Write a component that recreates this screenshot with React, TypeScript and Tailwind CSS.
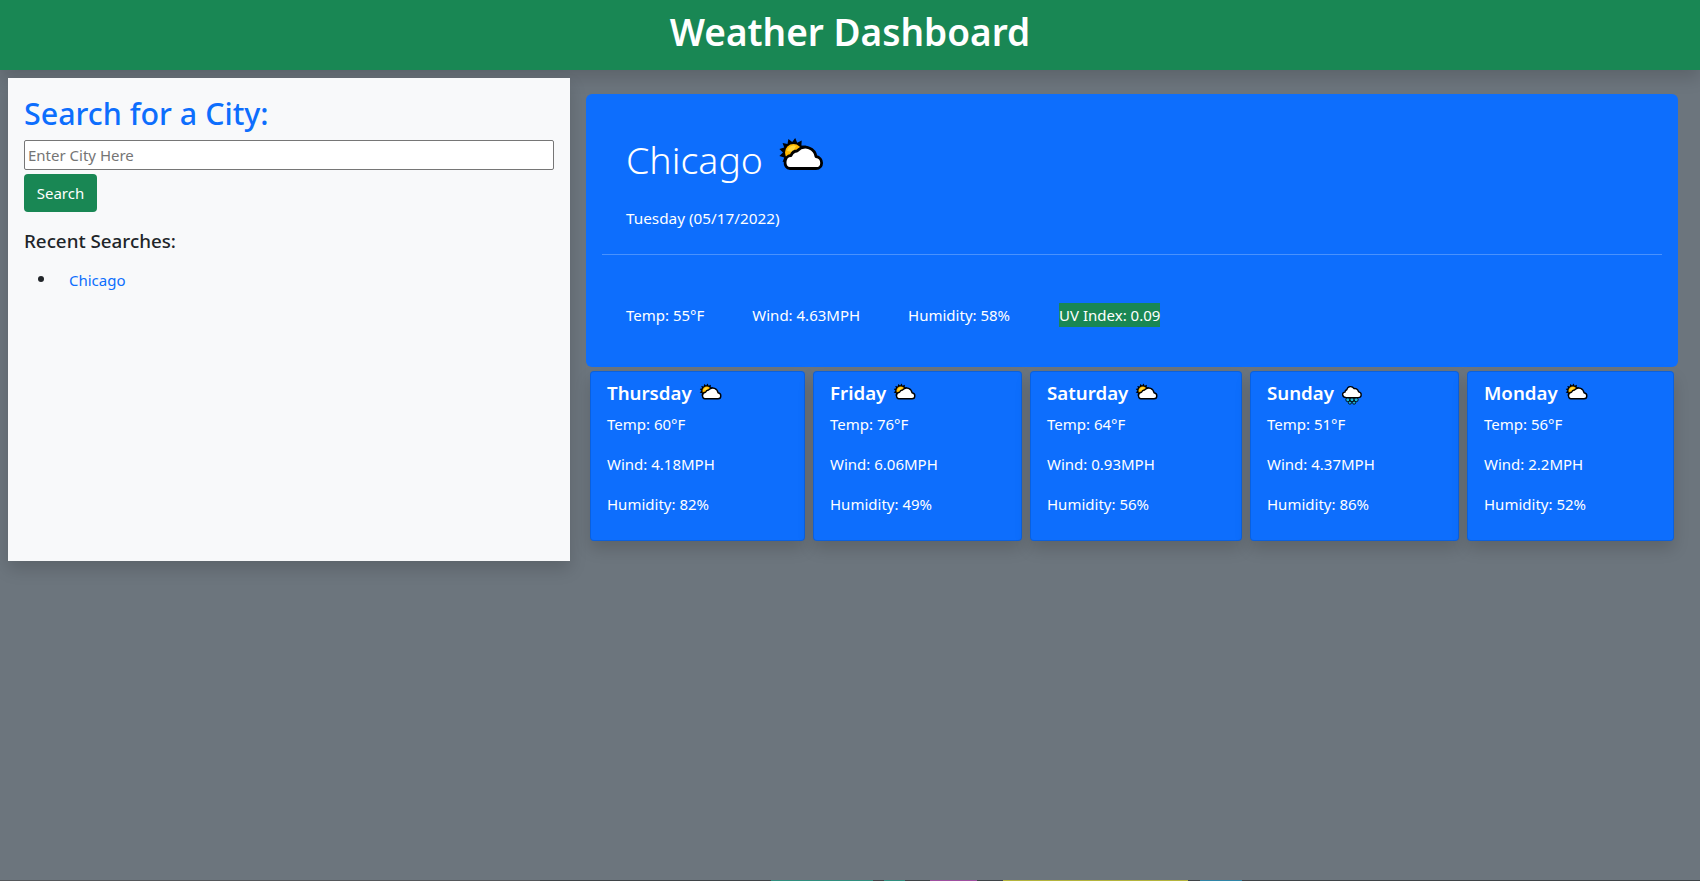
const font = "font-['Noto_Sans',sans-serif]";

const forecast = [
  { day: "Thursday", temp: "60", wind: "4.18", humidity: "82", width: "w-[215px]", rain: false },
  { day: "Friday", temp: "76", wind: "6.06", humidity: "49", width: "w-[209px]", rain: false },
  { day: "Saturday", temp: "64", wind: "0.93", humidity: "56", width: "w-[212px]", rain: false },
  { day: "Sunday", temp: "51", wind: "4.37", humidity: "86", width: "w-[209px]", rain: true },
  { day: "Monday", temp: "56", wind: "2.2", humidity: "52", width: "w-[207px]", rain: false },
];

const sunSpikes = () => {
  const pts: string[] = [];
  for (let i = 0; i < 26; i++) {
    const r = i % 2 === 0 ? 14.5 : 10.5;
    const a = (i / 26) * Math.PI * 2;
    pts.push(`${(24.5 + r * Math.cos(a)).toFixed(1)},${(26.5 + r * Math.sin(a)).toFixed(1)}`);
  }
  return pts.join(" ");
};

const cloud = "M21 42.5H47C54.5 42.5 54.5 31.5 47 30.5C46 23 36 17 28 25C25 25 23 27 22 29.5C14.5 29.5 14 42.5 21 42.5Z";

function PartlyCloudy({ className }: { className: string }) {
  return (
    <svg viewBox="9 11 46 34" className={className}>
      <polygon points={sunSpikes()} fill="#000" />
      <circle cx="24.5" cy="26.5" r="8.5" fill="#ffb900" />
      <path d="M18 25a7 7 0 0 1 9-5l-3 6z" fill="#ffd83b" />
      <path d={cloud} fill="#fff" stroke="#000" strokeWidth="2.8" strokeLinejoin="round" />
    </svg>
  );
}

function RainCloud({ className }: { className: string }) {
  return (
    <svg viewBox="0 0 21 19" className={className}>
      <g fill="#1cb5d8" stroke="#000" strokeWidth="0.8">
        <circle cx="6.5" cy="14" r="1.9" />
        <circle cx="10.5" cy="14" r="1.9" />
        <circle cx="14.5" cy="14" r="1.9" />
        <circle cx="8.5" cy="16.8" r="1.5" />
        <circle cx="12.5" cy="16.8" r="1.5" />
      </g>
      <path d="M5 12H16.5C20 12 20.3 7 16.8 6.5C16 3.5 13.5 3 12.5 3.5C10.5 0.5 6.5 1 5.5 4.5C4.5 4.8 3.8 5.5 3.8 6.8C0.5 6.8 0.8 12 5 12Z" fill="#fff" stroke="#000" strokeWidth="1.3" strokeLinejoin="round" />
    </svg>
  );
}

export default function App() {
  return (
    <div className={`${font} min-h-[881px] bg-[#6c757d] text-[15px] text-white flex flex-col`}>
      <header className="h-[70px] bg-[#198754] flex justify-center shadow-[0_8px_16px_rgba(0,0,0,0.15)]">
        <h1 className="text-[37px] font-semibold leading-[63px]">Weather Dashboard</h1>
      </header>

      <main className="flex flex-1 items-start">
        <aside className="ml-2 mt-2 w-[562px] h-[483px] bg-[#f8f9fa] px-4 pt-[17px] text-[#212529] shadow-[0_8px_16px_rgba(0,0,0,0.15)]">
          <h2 className="text-[30.4px] font-medium leading-[38px] mb-[7px] text-[#0d6efd]">Search for a City:</h2>
          <input
            placeholder="Enter City Here"
            className="block w-[530px] h-[30px] bg-white border border-[#767676] rounded-[2px] px-[3px] text-[15px] placeholder:text-[#757575]"
          />
          <button className="mt-1 block w-[73px] h-[38px] bg-[#198754] text-white rounded-[4px] text-[15px]">Search</button>
          <h3 className="mt-[17px] text-[18.8px] font-medium leading-6">Recent Searches:</h3>
          <ul className="mt-[15px] pl-[14px]">
            <li className="flex items-center gap-[25px] leading-6">
              <span className="w-1.5 h-1.5 rounded-full bg-[#212529] -mt-0.5" />
              <a className="text-[#0d6efd]">Chicago</a>
            </li>
          </ul>
        </aside>

        <section className="ml-4 mt-6 w-[1092px]">
          <div className="h-[273px] bg-[#0d6efd] rounded-md px-4 pt-[42px]">
            <div className="pl-6 flex items-center gap-[15px] h-12">
              <span className="text-[37.5px] font-light leading-[48px]">Chicago</span>
              <PartlyCloudy className="w-[46px] h-[34px] -mt-3" />
            </div>
            <p className="pl-6 mt-[22px] text-[15.3px] leading-6">Tuesday (05/17/2022)</p>
            <hr className="mt-6 border-white/25" />
            <div className="mt-12 pl-6 flex gap-12 leading-6">
              <span>Temp: 55°F</span>
              <span>Wind: 4.63MPH</span>
              <span>Humidity: 58%</span>
              <span className="bg-[#198754] ml-px">UV Index: 0.09</span>
            </div>
          </div>

          <div className="mt-1 ml-1 flex gap-2">
            {forecast.map((f) => (
              <div
                key={f.day}
                className={`${f.width} h-[170px] bg-[#0d6efd] border border-black/[0.125] rounded-[4px] px-4 pt-2 shadow-[0_8px_16px_rgba(0,0,0,0.15)]`}
              >
                <div className="flex items-center gap-[7px] h-6 mb-[7px] mt-px">
                  <span className="text-[18.7px] font-semibold leading-6">{f.day}</span>
                  {f.rain ? (
                    <RainCloud className="w-[22px] h-5 mt-[3px]" />
                  ) : (
                    <PartlyCloudy className="w-[23px] h-[17px] -mt-[3px]" />
                  )}
                </div>
                <p className="leading-6 mb-4">Temp: {f.temp}°F</p>
                <p className="leading-6 mb-4">Wind: {f.wind}MPH</p>
                <p className="leading-6">Humidity: {f.humidity}%</p>
              </div>
            ))}
          </div>
        </section>
      </main>

      <div className="h-px bg-[#3f4448] flex">
        <div className="w-[540px] bg-[#55585b]" />
        <div className="w-[231px]" />
        <div className="w-[102px] bg-[#2f8f7f]" />
        <div className="w-[11px]" />
        <div className="w-[21px] bg-[#2f8f7f]" />
        <div className="w-[25px]" />
        <div className="w-[47px] bg-[#a04fa0]" />
        <div className="w-[26px]" />
        <div className="w-[185px] bg-[#b5b53c]" />
        <div className="w-3" />
        <div className="w-[42px] bg-[#2f86a8]" />
      </div>
    </div>
  );
}
